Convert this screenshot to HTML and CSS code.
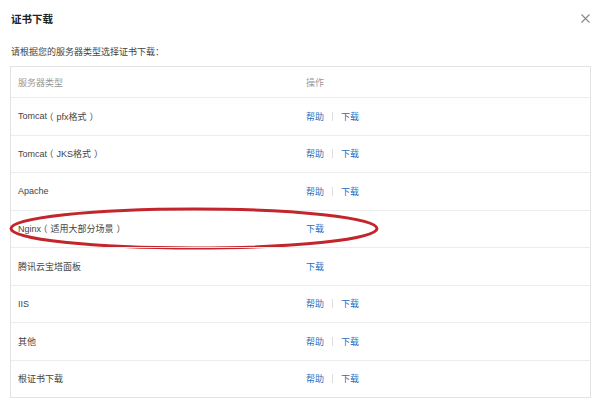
FILE: index.html
```html
<!DOCTYPE html>
<html lang="zh-CN">
<head>
    <meta charset="UTF-8">
    <meta name="viewport" content="width=device-width, initial-scale=1.0">
    <title>证书下载</title>
    <link rel="stylesheet" href="styles.css">
</head>
<body>
    <div class="dialog">
        <div class="dialog-head">
            <h2 class="dialog-title">证书下载</h2>
            <svg class="close" width="9" height="9" viewBox="0 0 9 9">
                <path d="M0.5 0.5 L8.5 8.5 M8.5 0.5 L0.5 8.5" stroke="#888" stroke-width="1.1" fill="none"/>
            </svg>
        </div>
        <p class="desc">请根据您的服务器类型选择证书下载：</p>
        <div class="table">
            <div class="row head">
                <div class="cell">服务器类型</div>
                <div class="cell">操作</div>
            </div>
            <div class="row">
                <div class="cell">Tomcat<span class="open">（</span>pfx格式<span class="close-p">）</span></div>
                <div class="cell"><a class="link">帮助</a><span class="sep"></span><a class="link">下载</a></div>
            </div>
            <div class="row">
                <div class="cell">Tomcat<span class="open">（</span>JKS格式<span class="close-p">）</span></div>
                <div class="cell"><a class="link">帮助</a><span class="sep"></span><a class="link">下载</a></div>
            </div>
            <div class="row">
                <div class="cell">Apache</div>
                <div class="cell"><a class="link">帮助</a><span class="sep"></span><a class="link">下载</a></div>
            </div>
            <div class="row marked">
                <div class="cell">Nginx<span class="open">（</span>适用大部分场景<span class="close-p">）</span></div>
                <div class="cell"><a class="link">下载</a></div>
                <svg class="circle" width="372" height="44" viewBox="0 0 372 44">
                    <ellipse cx="185" cy="21.5" rx="183" ry="19.5" fill="none" stroke="#c3252d" stroke-width="3"/>
                </svg>
            </div>
            <div class="row">
                <div class="cell">腾讯云宝塔面板</div>
                <div class="cell"><a class="link">下载</a></div>
            </div>
            <div class="row">
                <div class="cell">IIS</div>
                <div class="cell"><a class="link">帮助</a><span class="sep"></span><a class="link">下载</a></div>
            </div>
            <div class="row">
                <div class="cell">其他</div>
                <div class="cell"><a class="link">帮助</a><span class="sep"></span><a class="link">下载</a></div>
            </div>
            <div class="row">
                <div class="cell">根证书下载</div>
                <div class="cell"><a class="link">帮助</a><span class="sep"></span><a class="link">下载</a></div>
            </div>
        </div>
    </div>
</body>
</html>
```

FILE: styles.css
```css
body {
    margin: 0;
    background-color: #fff;
    font-family: "Liberation Sans", "Noto Sans CJK SC", sans-serif;
    font-size: 9px;
    color: #444;
}
.dialog {
    padding: 0 10px 0 10px;
}
.dialog-head {
    display: flex;
    justify-content: space-between;
    align-items: center;
    height: 37px;
    padding: 0 0 0 1px;
}
.dialog-title {
    margin: 0;
    font-size: 10.5px;
    font-weight: bold;
    color: #222;
}
.desc {
    margin: 0;
    padding-left: 1px;
    height: 29px;
    line-height: 30px;
    color: #444;
}
.table {
    border: 1px solid #e3e3e3;
    width: 579px;
}
.row {
    position: relative;
    display: grid;
    grid-template-columns: 288px 1fr;
    align-items: center;
    height: 36.5px;
    border-top: 1px solid #ececec;
}
.row.head {
    height: 30px;
    border-top: none;
    color: #999;
}
.cell {
    padding-left: 7px;
    display: flex;
    align-items: center;
    white-space: pre;
}
.open,
.close-p {
    font-feature-settings: "halt";
}
.open {
    margin: 0 3px 0 2px;
}
.close-p {
    margin: 0 0 0 3px;
}
.link {
    color: #2870bf;
}
.sep {
    width: 1px;
    height: 9px;
    margin: 0 8px;
    background-color: #ddd;
}
.circle {
    position: absolute;
    left: -2px;
    top: -4px;
}
```
